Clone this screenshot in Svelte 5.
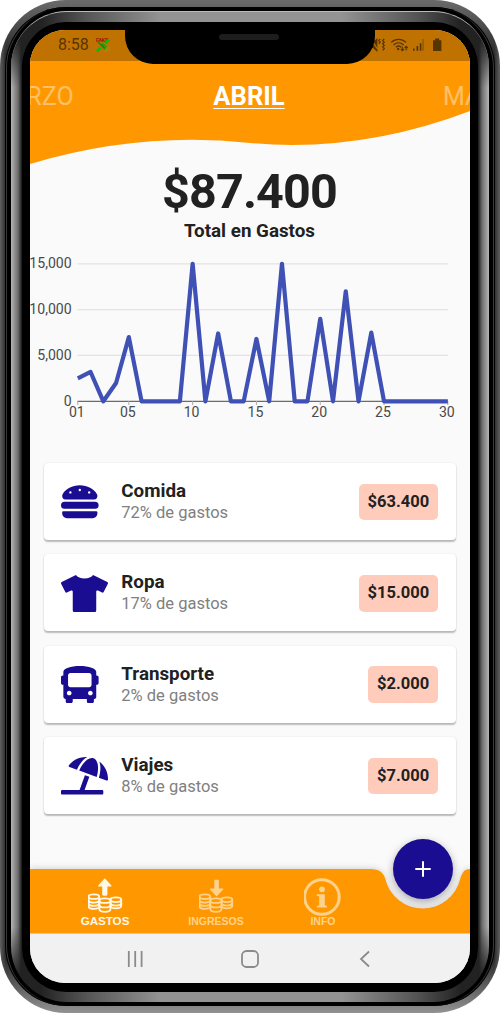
<script>
  const spend = [2500, 3200, 0, 2000, 7000, 0, 0, 0, 0, 15000, 0, 7400, 0, 0, 6800, 0, 15000, 0, 0, 9000, 0, 12000, 0, 7500, 0, 0, 0, 0, 0, 0];
  const px = (day) => 47.8 + (day - 1) * 12.76;
  const py = (v) => 151.3 - (v / 15000) * 137.5;
  const points = spend.map((v, i) => `${px(i + 1)},${py(v)}`).join(' ');
  const yTicks = [[15000, '15,000'], [10000, '10,000'], [5000, '5,000'], [0, '0']];
  const xTicks = [1, 5, 10, 15, 20, 25, 30];

  const categories = [
    { name: 'Comida', share: '72% de gastos', amount: '$63.400', w: 512,
      d: 'M464 256H48a48 48 0 0 0 0 96h416a48 48 0 0 0 0-96zm16 128H32a16 16 0 0 0-16 16v16a64 64 0 0 0 64 64h352a64 64 0 0 0 64-64v-16a16 16 0 0 0-16-16zM58.64 224h394.72c34.57 0 54.62-43.9 34.82-75.88C448 83.2 359.55 32.1 256 32c-103.54.1-192 51.2-232.18 116.11C4 180.09 24.07 224 58.64 224zM384 112a16 16 0 1 1-16 16 16 16 0 0 1 16-16zM256 80a16 16 0 1 1-16 16 16 16 0 0 1 16-16zm-128 32a16 16 0 1 1-16 16 16 16 0 0 1 16-16z' },
    { name: 'Ropa', share: '17% de gastos', amount: '$15.000', w: 640,
      d: 'M631.2 96.5L436.5 0C416.4 27.8 371.9 47.2 320 47.2S223.6 27.8 203.5 0L8.8 96.5c-7.9 4-11.1 13.6-7.2 21.5l57.2 114.5c4 7.9 13.6 11.1 21.5 7.2l56.6-27.7c10.6-5.2 23 2.5 23 14.4V480c0 17.7 14.3 32 32 32h256c17.7 0 32-14.3 32-32V226.3c0-11.8 12.4-19.6 23-14.4l56.6 27.7c7.9 4 17.5.8 21.5-7.2L638.3 118c4-7.9.8-17.6-7.1-21.5z' },
    { name: 'Transporte', share: '2% de gastos', amount: '$2.000', w: 512,
      d: 'M488 128h-8V80c0-44.8-99.2-80-224-80S32 35.2 32 80v48h-8c-13.25 0-24 10.74-24 24v80c0 13.25 10.75 24 24 24h8v160c0 17.67 14.33 32 32 32v32c0 17.67 14.33 32 32 32h32c17.67 0 32-14.33 32-32v-32h192v32c0 17.67 14.33 32 32 32h32c17.67 0 32-14.33 32-32v-32h6.4c16 0 25.6-12.8 25.6-25.6V256h8c13.25 0 24-10.75 24-24v-80c0-13.26-10.75-24-24-24zM112 400c-17.67 0-32-14.33-32-32s14.33-32 32-32 32 14.33 32 32-14.33 32-32 32zm16-112c-17.67 0-32-14.33-32-32V128c0-17.67 14.33-32 32-32h256c17.67 0 32 14.33 32 32v128c0 17.67-14.33 32-32 32H128zm272 112c-17.67 0-32-14.33-32-32s14.33-32 32-32 32 14.33 32 32-14.33 32-32 32z' },
    { name: 'Viajes', share: '8% de gastos', amount: '$7.000', w: 640,
      d: 'M115.38 136.9l102.11 37.18c35.19-81.54 86.21-144.29 139-173.7-95.88-4.89-188.78 36.96-248.53 111.8-6.69 8.4-2.66 21.05 7.42 24.72zm132.25 48.16l238.48 86.83c35.76-121.38 18.7-231.66-42.63-253.98-7.4-2.7-15.13-4-23.09-4-58.02.02-128.27 69.17-172.76 171.15zM521.48 60.5c6.22 16.3 10.83 34.6 13.2 55.19 5.74 49.89-1.42 108.23-18.95 166.98l102.62 37.36c10.09 3.67 21.31-3.43 21.57-14.17 2.32-95.69-41.91-187.44-118.44-245.36zM560 447.98H321.06L386 269.5l-60.14-21.9-72.9 200.37H16c-8.84 0-16 7.16-16 16.01v32.01C0 504.83 7.16 512 16 512h544c8.84 0 16-7.16 16-16.01v-32.01c0-8.84-7.16-16-16-16z' }
  ];
</script>

{#snippet coins()}
  <g fill="none" stroke="currentColor" stroke-width="1.9" transform="translate(-.6) scale(1 .92)">
    <path d="M1.2 20.4v10.4c0 1.7 2.3 2.8 5.3 2.8s5.3-1 5.3-2.8V20.4M1.2 23.9c0 1.7 2.2 2.8 5.3 2.8s5.3-1.1 5.3-2.8M1.2 27.4c0 1.7 2.2 2.8 5.3 2.8s5.3-1.1 5.3-2.8" />
    <ellipse cx="6.5" cy="20.3" rx="5.3" ry="2.5" />
    <path d="M23.2 24v6.2c0 1.6 2.3 2.7 5.3 2.7s5.3-1.1 5.3-2.7V24M23.2 27.2c0 1.6 2.3 2.7 5.3 2.7s5.3-1.1 5.3-2.7" />
    <ellipse cx="28.5" cy="23.6" rx="5.3" ry="2.5" />
    <path fill="#ff9800" d="M12 24.6v9.4c0 1.6 2.4 2.7 5.5 2.7s5.5-1.1 5.5-2.7v-9.4" />
    <path d="M12 29.3c0 1.6 2.4 2.7 5.5 2.7s5.5-1.1 5.5-2.7" />
    <ellipse cx="17.5" cy="24.6" rx="5.5" ry="2.5" fill="#ff9800" />
  </g>
{/snippet}

<div class="shell">
  <div class="band">
    <div class="metal">
      <div class="bezel">
        <main class="screen">
          <header>
            <svg class="wave" viewBox="0 0 440 136"><path fill="#ff9800" d="M0 0H440V81Q330 123 220 113Q110 101 0 134Z" /></svg>
            <div class="status">
              <span class="time">8:58</span>
              <svg class="sat" width="16" height="18" viewBox="0 0 16 18">
                <text x="1" y="6.4" font-size="5.2" font-weight="700" fill="#a01808">FAKE</text>
                <path d="M1 14.2l3.6-3.4 2 2-3.8 3.4zM9.3 6.5L12.8 2.4l1.9 1.8-3.6 4.2z" fill="#12b512" />
                <path d="M5 9l2.6-2.6 4.6 4.8-2.6 2.4z" fill="#19a30c" />
                <path d="M2.6 5.5l7 7" stroke="#267c0b" stroke-width="1.2" />
                <path d="M9.6 15.4c2.8.2 4.8-1.8 4.8-4.6M10 13.2c1.2 0 2.1-1 2.1-2.2" fill="none" stroke="#78a822" />
              </svg>
              <svg class="sys" width="72" height="16" viewBox="0 0 72 16">
                <g fill="#573500">
                  <path d="M0 5h3l4.4-4v14L3 11H0z" />
                  <path d="M63 3.2h2.2V1.6h4v1.6h2.2V14H63z" />
                  <path d="M43 11.5h1.6v2.3H43zM46.5 9h1.7v4.8h-1.7zM49.8 6.3h1.6v7.5h-1.6z" />
                  <path d="M52.4 2h1.3v11.8h-1.3z" opacity=".45" />
                </g>
                <g fill="none" stroke="#573500" stroke-width="1.3">
                  <path d="M10.2 2L8.8 3.6l1.4 1.6-1.4 1.6M14.2 2l-1.5 1.6 1.5 1.6-1.5 1.6 1.5 1.6-1.5 1.6 1.5 1.6-1.5 1.6" />
                  <path d="M0 1l7.5 11" stroke="#bf7200" />
                  <path d="M21.2 5.4c4.2-4.1 10.6-4.1 14.8 0M23.6 7.9c3-2.8 7-2.8 10 0M26 10.2c1.6-1.5 3.6-1.5 5.2 0" />
                  <path d="M32.4 9.6v4M30.8 12l1.6 1.7 1.6-1.7M36.2 13.6V9.4M34.6 11l1.6-1.7 1.6 1.7" stroke-width="1.1" />
                </g>
                <circle cx="28.2" cy="12" r="1.2" fill="#573500" />
              </svg>
            </div>
            <nav class="months"><span>MARZO</span><strong>ABRIL</strong><span>MAYO</span></nav>
          </header>

          <section class="total">
            <h1>$87.400</h1>
            <h2>Total en Gastos</h2>
          </section>

          <svg class="chart" width="440" height="180" viewBox="0 0 440 180">
            {#each yTicks as [v, label]}
              <line x1="47.5" x2="418" y1={py(v)} y2={py(v)} stroke={v ? '#e3e3e3' : '#6b6b6b'} stroke-width={v ? 1.2 : 1.3} />
              <text x="41.7" y={py(v) + 4.3} text-anchor="end">{label}</text>
            {/each}
            {#each xTicks as day}
              <line x1={px(day)} x2={px(day)} y1="151" y2="155" stroke="#aaa" />
              <text x={px(day) - 1} y="167.3" text-anchor="middle">{String(day).padStart(2, '0')}</text>
            {/each}
            <polyline {points} fill="none" stroke="#3f51b5" stroke-width="4.2" stroke-linejoin="round" />
          </svg>

          <ul class="cards">
            {#each categories as c}
              <li>
                <span class="icon"><svg width={(37.6 * c.w) / 512} height="37.6" viewBox="0 0 {c.w} 512"><path fill="#1a0d91" d={c.d} /></svg></span>
                <div class="info"><b>{c.name}</b><span>{c.share}</span></div>
                <em>{c.amount}</em>
              </li>
            {/each}
          </ul>

          <footer>
            <svg class="barshape" viewBox="0 0 440 64.5">
              <path fill="#ff9800" d="M0 0H340C350 0 353.5 4 355.3 10A38.5 38.5 0 0 0 430.2 10C432 4 434 0 440 0V64.5H0Z" />
            </svg>
            <div class="tabs">
              <div class="tab active">
                <svg width="35" height="38" viewBox="0 0 35 38">
                  <path fill="currentColor" transform="translate(-.8)" d="M17.6 .3L24.2 7.6c.3.6 0 1-.6 1h-3.4v7.7c0 1-.6 1.4-1.4 1.4h-2.4c-.8 0-1.4-.5-1.4-1.4V8.6h-3.4c-.6 0-.9-.4-.6-1z" />
                  {@render coins()}
                </svg>
                <span>GASTOS</span>
              </div>
              <div class="tab">
                <svg width="35" height="38" viewBox="0 0 35 38">
                  {@render coins()}
                  <path fill="currentColor" d="M17.6 18.6L24.2 11.6c.3-.6 0-1-.6-1h-3.7V3c0-.8-.5-1.3-1.3-1.3h-2c-.8 0-1.3.5-1.3 1.3v7.6h-3.7c-.6 0-.9.4-.6 1z" />
                </svg>
                <span>INGRESOS</span>
              </div>
              <div class="tab">
                <svg width="38" height="38" viewBox="0 0 38 38">
                  <g transform="translate(-.6)">
                    <circle cx="18.5" cy="19" r="17.3" fill="none" stroke="currentColor" stroke-width="3" />
                    <circle cx="18.6" cy="11.3" r="2.9" fill="currentColor" />
                    <path fill="currentColor" d="M13.4 16.2h8v10.2c0 .8.4 1.1 2.2 1.3v1.9H13.4v-1.9c1.8-.2 2.4-.5 2.4-1.3v-7c0-.9-.5-1.2-2.4-1.3z" />
                  </g>
                </svg>
                <span>INFO</span>
              </div>
            </div>
            <div class="fab"><svg width="16" height="16" viewBox="0 0 16 16"><path d="M8 .3v15.4M.3 8h15.4" stroke="#fff" stroke-width="2" /></svg></div>
          </footer>

          <div class="sysnav">
            <svg width="18" height="18" viewBox="0 0 18 18"><path d="M2.8 1v16M9.2 1v16M15.6 1v16" stroke="#8b8b8b" stroke-width="1.8" /></svg>
            <svg width="18" height="18" viewBox="0 0 18 18"><rect x="1" y="1" width="16" height="16" rx="4.5" fill="none" stroke="#8b8b8b" stroke-width="1.8" /></svg>
            <svg width="18" height="18" viewBox="0 0 18 18"><path d="M13 1.5L5 9l8 7.5" fill="none" stroke="#8b8b8b" stroke-width="1.8" /></svg>
          </div>
          <div class="notch"><i></i></div>
        </main>
      </div>
    </div>
  </div>
</div>

<style>
  :global(body) { background: #fff; }
  .shell, .shell * { box-sizing: border-box; }
  .shell { width: 500px; height: 1013px; padding: 7px 5px; border-radius: 66px; font-family: Roboto, sans-serif;
    background: linear-gradient(#6b6b6b, transparent 55px calc(100% - 55px), #929292), linear-gradient(90deg, #606060, #292929 6px, #292929 494px, #606060); }
  .band { height: 999px; padding: 4px 6px; border-radius: 61px; background: #000; box-shadow: inset 0 0 0 1px #000, inset 1.5px 0 0 0.5px #3a3a3a, inset -1.5px 0 0 0.5px #3a3a3a; }
  .metal { position: relative; height: 991px; padding: 10px 11px; border-radius: 56px; overflow: hidden; border-top: 1px solid #bbb;
    background: linear-gradient(90deg, #222 30px, #555 75px, #939393 150px, #939393 330px, #555 405px, #222 450px); }
  .metal::before { content: ''; position: absolute; inset: 0;
    background: linear-gradient(90deg, #b5b5b5, #6d6d6d 7px, #151515 11px, transparent 11px, transparent calc(100% - 11px), #151515 calc(100% - 11px), #6d6d6d calc(100% - 7px), #b5b5b5);
    mask-image: linear-gradient(transparent 25px, #000 75px, #000 calc(100% - 75px), transparent calc(100% - 25px)); }
  .bezel { position: relative; height: 970px; padding: 8px 8px 9px; border-radius: 44px; background: #000; }
  .screen { position: relative; display: flex; flex-direction: column; width: 440px; height: 953px; border-radius: 35px; overflow: hidden; background: #fafafa; color: #212121; }
  header { position: relative; height: 136px; flex: none; }
  .wave { position: absolute; inset: 0; width: 440px; height: 136px; }
  .status { position: relative; display: flex; align-items: center; height: 31px; padding: 0 28px 2px; background: #bf7200; color: #573500; font-size: 16px; }
  .time { width: 37px; line-height: 29px; }
  .sys { margin-left: auto; }
  .months { position: relative; display: grid; grid-template-columns: 1fr auto 1fr; align-items: center; height: 70px; margin: 0 -42px; font-size: 25px; line-height: 30px; color: #ffc168; }
  .months span { padding-top: 1px; }
  .months span:last-child { text-align: right; }
  .months strong { color: #fff; font-size: 25.6px; margin-right: 2px; text-decoration: underline; text-decoration-thickness: 1.4px; text-underline-offset: 2.5px; }
  .total { height: 78px; text-align: center; }
  h1 { margin: -2px 0 0; font-size: 48.5px; line-height: 56px; font-weight: 700; letter-spacing: -0.85px; padding-right: 1px; }
  h2 { margin: 0; font-size: 18.8px; line-height: 22px; font-weight: 700; padding-right: 1px; }
  .chart { flex: none; margin-top: 6px; }
  .chart text { font-size: 14.1px; fill: #4a4a4a; }
  .cards { list-style: none; margin: 0; padding: 33px 14.5px 0 14px; display: flex; flex-direction: column; gap: 14.3px; }
  .cards li { display: flex; align-items: center; height: 77px; padding: 1px 17.5px 0 17.3px; background: #fff; border-radius: 4px; box-shadow: 0 1.5px 1.5px rgba(0,0,0,.25), 0 0 2px rgba(0,0,0,.08); }
  .icon { display: flex; flex: none; width: 60px; }
  .info { display: flex; flex-direction: column; flex: 1; }
  .info b { font-size: 18.8px; line-height: 22px; }
  .info span { font-size: 16.5px; line-height: 22px; color: #808080; }
  em { font-style: normal; font-weight: 700; font-size: 16.5px; line-height: 36.5px; padding: 0 8.8px; border-radius: 5px; background: #ffccbc; }
  footer { position: relative; height: 64.5px; margin-top: auto; flex: none; }
  .barshape { position: absolute; inset: 0; width: 440px; height: 64.5px; filter: drop-shadow(0 -1px 3px rgba(0,0,0,.15)); }
  .tabs { position: relative; display: grid; grid-template-columns: 130px 92px 122px; padding: 8.5px 0 0 10px; }
  .tab { display: flex; flex-direction: column; align-items: center; color: #ffd28c; font: 700 10.5px/12px "Liberation Sans", sans-serif; }
  .tab span { line-height: 12px; margin-top: -1px; }
  .active { color: #fff8e8; font-size: 11.6px; }
  .fab { position: absolute; left: 362.8px; top: -30px; width: 60px; height: 60px; border-radius: 50%; background: #1a0d91; display: grid; place-items: center; box-shadow: 0 3px 8px rgba(0,0,0,.35); }
  .sysnav { position: relative; flex: none; height: 49.5px; background: #f1f1f1; display: flex; justify-content: space-between; align-items: center; padding: 1px 96px 0; }
  .notch { position: absolute; left: 95px; top: -1px; width: 250px; height: 35px; background: #000; border-radius: 0 0 28px 28px; display: flex; justify-content: center; padding-top: 5px; }
  .notch i { width: 60px; height: 6px; border-radius: 3px; background: #1d1d1d; margin-right: 2px; }
</style>
